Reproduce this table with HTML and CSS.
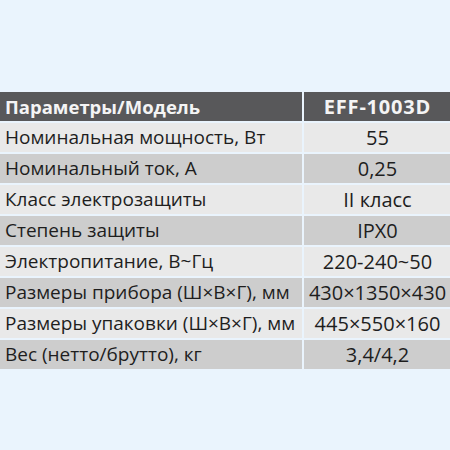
FILE: index.html
```html
<!DOCTYPE html>
<html lang="ru">
<head>
<meta charset="utf-8">
<link rel="stylesheet" href="styles.css">
</head>
<body>
<div class="spec">
  <div class="cell head name">Параметры/Модель</div>
  <div class="cell head val">EFF-1003D</div>
  <div class="cell name">Номинальная мощность, Вт</div>
  <div class="cell val">55</div>
  <div class="cell name dark">Номинальный ток, А</div>
  <div class="cell val dark">0,25</div>
  <div class="cell name">Класс электрозащиты</div>
  <div class="cell val">II класс</div>
  <div class="cell name dark">Степень защиты</div>
  <div class="cell val dark">IPX0</div>
  <div class="cell name">Электропитание, В~Гц</div>
  <div class="cell val">220-240~50</div>
  <div class="cell name dark">Размеры прибора (Ш×В×Г), мм</div>
  <div class="cell val dark">430×1350×430</div>
  <div class="cell name">Размеры упаковки (Ш×В×Г), мм</div>
  <div class="cell val">445×550×160</div>
  <div class="cell name dark">Вес (нетто/брутто), кг</div>
  <div class="cell val dark">3,4/4,2</div>
</div>
</body>
</html>
```
FILE: styles.css
```css
html, body {
  margin: 0;
  padding: 0;
  background: #eaf4fd;
  width: 450px;
  height: 450px;
  overflow: hidden;
}
body {
  padding-top: 92px;
  box-sizing: border-box;
  font-family: "Open Sans", "Noto Sans", sans-serif;
  color: #1e1e1e;
}
.spec {
  display: grid;
  grid-template-columns: 302px 147px;
  grid-auto-rows: 29px;
  column-gap: 2px;
  row-gap: 2px;
  width: 451px;
}
.cell {
  background: #e9e9e9;
  font-size: 19px;
  line-height: 29px;
  white-space: nowrap;
}
.cell.dark {
  background: #cdcdcd;
}
.name {
  padding-left: 5px;
}
.val {
  text-align: center;
  font-size: 20px;
}
.head {
  background: #58585a;
  color: #f4f4f4;
  font-weight: 700;
}
.head.name {
  font-size: 18.5px;
}
.head.val {
  font-size: 20px;
  letter-spacing: 0.8px;
}
```
